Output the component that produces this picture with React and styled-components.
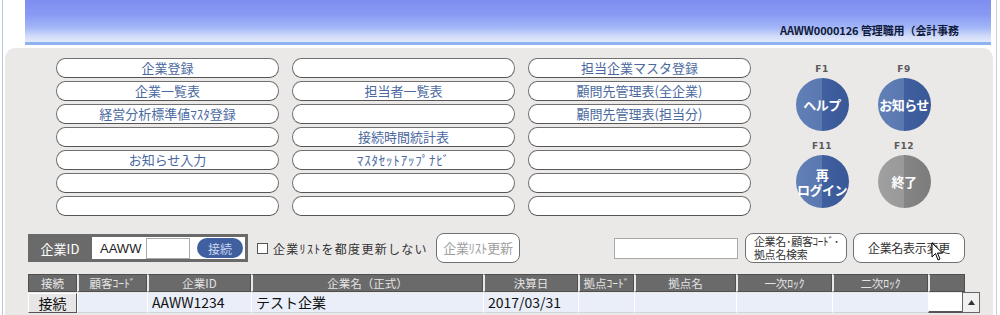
import React from 'react';
import styled, {createGlobalStyle} from 'styled-components';

const GlobalStyle = createGlobalStyle`
  body {
    margin: 0;
    background: #fff;
    font-family: "Noto Sans CJK JP", "Noto Sans", sans-serif;
  }
`;

const Page = styled.div`
  position: relative;
  width: 1000px;
  height: 315px;
  overflow: hidden;
  background: #fff;
  box-shadow: inset 2px 0 0 #fff, inset 3px 0 0 #b4c8e0, inset -3px 0 0 #fff, inset -4px 0 0 #d0d0d0;
`;

const Header = styled.div`
  margin-left: 25px;
  width: 966px;
  height: 45px;
  border-bottom: 3px solid #8eb4f0;
  background: linear-gradient(180deg, #7d8def 0%, #8a9af3 35%, #a2b6f8 65%, #d4def9 88%, #e2e9fb 100%);
  display: flex;
  align-items: flex-end;
  justify-content: flex-end;
  padding-right: 32px;
  box-sizing: border-box;
`;

const UserName = styled.div`
  font-size: 11px;
  font-weight: bold;
  color: #101a3a;
  line-height: 14px;
  margin-bottom: 5px;
  letter-spacing: -0.1px;
`;

const Panel = styled.div`
  margin: 3px 0 0 5px;
  width: 988px;
  height: 270px;
  background: #ebe8e8;
  border-radius: 10px 10px 0 0;
  padding: 10px 0 0 23px;
  box-sizing: border-box;
`;

const TopArea = styled.div`
  display: flex;
  align-items: flex-start;
`;

const MenuGrid = styled.div`
  margin-left: 28px;
  display: grid;
  grid-template-columns: repeat(3, 223px);
  grid-auto-flow: column;
  grid-template-rows: repeat(7, 20px);
  column-gap: 13px;
  row-gap: 3px;
`;

const MenuButton = styled.button`
  box-sizing: border-box;
  height: 20px;
  padding: 0;
  background: #fff;
  border: 1.5px solid #707070;
  border-bottom-color: #555;
  border-radius: 9px / 10px;
  font-family: "Noto Sans CJK JP", sans-serif;
  font-size: 13px;
  line-height: 16px;
  color: #4a69a0;
  text-align: center;
  letter-spacing: ${p => p.$ls || 0}px;
`;

const FKeys = styled.div`
  margin-left: 43px;
  padding-top: 6px;
  display: grid;
  grid-template-columns: repeat(2, 56px);
  column-gap: 26px;
  row-gap: 10px;
`;

const FKey = styled.div`
  display: flex;
  flex-direction: column;
  align-items: center;
`;

const FLabel = styled.div`
  font-family: "DejaVu Sans", sans-serif;
  font-size: 9px;
  font-weight: bold;
  color: #5a5a5a;
  line-height: 11px;
  height: 14px;
  letter-spacing: 0.5px;
`;

const Circle = styled.div`
  width: 53px;
  height: 53px;
  border-radius: 50%;
  background: ${p => p.$gray
    ? 'linear-gradient(90deg, #a0a0a0 0%, #999 50%, #858585 50%, #7c7c7c 100%)'
    : 'linear-gradient(90deg, #6180b6 0%, #5a78b0 50%, #3f5f9f 50%, #385898 100%)'};
  display: flex;
  align-items: center;
  justify-content: center;
  text-align: center;
  color: #fff;
  font-size: 13px;
  font-weight: bold;
  line-height: 15px;
  letter-spacing: -0.5px;
  white-space: pre-line;
`;

const Controls = styled.div`
  margin-top: 16px;
  height: 32px;
  display: flex;
  align-items: center;
`;

const IdBox = styled.div`
  width: 220px;
  height: 28px;
  background: #6a6a6a;
  display: flex;
  align-items: center;
  box-sizing: border-box;
  padding: 3px 3px 3px 0;
`;

const IdLabel = styled.div`
  width: 64px;
  text-align: center;
  color: #fff;
  font-size: 13px;
`;

const IdInner = styled.div`
  flex: 1;
  height: 100%;
  background: #fff;
  display: flex;
  align-items: center;
  padding-left: 8px;
`;

const Prefix = styled.span`
  font-family: "Liberation Sans", sans-serif;
  font-size: 13px;
  color: #222;
  width: 46px;
`;

const SmallInput = styled.div`
  box-sizing: border-box;
  width: ${p => p.$w}px;
  height: 21px;
  background: #fff;
  border: 1px solid #a8a8a8;
  margin-left: ${p => p.$ml || 0}px;
`;

const ConnectButton = styled.div`
  width: 46px;
  height: 20px;
  margin-left: 7px;
  border-radius: 10px;
  background: #3f5f9f;
  color: #c8d4ee;
  font-size: 12px;
  display: flex;
  align-items: center;
  justify-content: center;
`;

const Check = styled.label`
  display: flex;
  align-items: center;
  margin-left: 9px;
  font-size: 12px;
  color: #333;
  letter-spacing: 1.3px;
`;

const CheckBox = styled.span`
  width: 9px;
  height: 9px;
  border: 1px solid #555;
  background: #fff;
  margin-right: 5px;
`;

const PillButton = styled.div`
  box-sizing: border-box;
  width: ${p => p.$w}px;
  height: 30px;
  margin-left: ${p => p.$ml}px;
  border: 1.5px solid #707070;
  border-radius: 8px;
  background: #fff;
  color: ${p => (p.$disabled ? '#a0a0a0' : '#333')};
  font-size: ${p => p.$fs || 12}px;
  line-height: ${p => p.$lh || 14}px;
  display: flex;
  align-items: center;
  justify-content: ${p => (p.$left ? 'flex-start' : 'center')};
  padding-left: ${p => (p.$left ? 8 : 0)}px;
  white-space: pre-line;
  letter-spacing: -0.3px;
`;

const Table = styled.div`
  margin-top: 10px;
  display: grid;
  grid-template-columns: 49px 70px 104px 232px 95px 56px 102px 96px 96px 37px;
`;

const HeadCell = styled.div`
  box-sizing: border-box;
  height: 18px;
  background: #6a6a6a;
  border: 1px solid #4f4f4f;
  border-left: 2px solid #ebe8e8;
  color: #e4e4e4;
  font-size: 11.5px;
  line-height: 16px;
  text-align: center;
  &:first-child { border-left: 1px solid #4f4f4f; }
`;

const RowCell = styled.div`
  box-sizing: border-box;
  height: 20px;
  margin-top: 1px;
  background: ${p => (p.$white ? '#fff' : '#e9eef8')};
  border-left: 1px solid #fff;
  border-bottom: ${p => (p.$white ? '2px solid #555' : '1px solid #d0d4dc')};
  color: #111;
  font-size: 14px;
  line-height: 19px;
  padding-left: 4px;
  white-space: nowrap;
  overflow: hidden;
`;

const RowButton = styled.div`
  box-sizing: border-box;
  height: 20px;
  margin-top: 1px;
  background: #e6e6e6;
  border: 1px solid #fff;
  border-right-color: #555;
  border-bottom-color: #555;
  color: #111;
  font-size: 14px;
  line-height: 18px;
  text-align: center;
`;

const ScrollArrow = styled.div`
  position: absolute;
  left: 962px;
  top: 292px;
  width: 18px;
  height: 21px;
  box-sizing: border-box;
  border: 1px solid #666;
  background: #f0f0f0;
  display: flex;
  align-items: center;
  justify-content: center;
`;

const Cursor = styled.svg`
  position: absolute;
  left: 931px;
  top: 242px;
`;

const menu = [
  '企業登録', '企業一覧表', '経営分析標準値ﾏｽﾀ登録', '', 'お知らせ入力', '', '',
  '', '担当者一覧表', '', '接続時間統計表', 'ﾏｽﾀｾｯﾄｱｯﾌﾟﾅﾋﾞ', '', '',
  '担当企業マスタ登録', '顧問先管理表(全企業)', '顧問先管理表(担当分)', '', '', '', '',
];

const fkeys = [
  {key: 'F1', label: 'ヘルプ'},
  {key: 'F9', label: 'お知らせ'},
  {key: 'F11', label: '再\nログイン'},
  {key: 'F12', label: '終了', gray: true},
];

const heads = ['接続', '顧客ｺｰﾄﾞ', '企業ID', '企業名（正式）', '決算日', '拠点ｺｰﾄﾞ', '拠点名', '一次ﾛｯｸ', '二次ﾛｯｸ', ''];
const row = ['AAWW1234', 'テスト企業', '2017/03/31', '', '', '', ''];

export default function App() {
  return (
    <Page>
      <GlobalStyle />
      <Header>
        <UserName>AAWW0000126 管理職用（会計事務</UserName>
      </Header>
      <Panel>
        <TopArea>
          <MenuGrid>
            {menu.map((m, i) => (
              <MenuButton key={i} $ls={m === 'ﾏｽﾀｾｯﾄｱｯﾌﾟﾅﾋﾞ' ? 0.8 : 0}>{m}</MenuButton>
            ))}
          </MenuGrid>
          <FKeys>
            {fkeys.map(f => (
              <FKey key={f.key}>
                <FLabel>{f.key}</FLabel>
                <Circle $gray={f.gray}>{f.label}</Circle>
              </FKey>
            ))}
          </FKeys>
        </TopArea>

        <Controls>
          <IdBox>
            <IdLabel>企業ID</IdLabel>
            <IdInner>
              <Prefix>AAWW</Prefix>
              <SmallInput $w={44} />
              <ConnectButton>接続</ConnectButton>
            </IdInner>
          </IdBox>
          <Check><CheckBox />企業ﾘｽﾄを都度更新しない</Check>
          <PillButton $w={84} $ml={8} $disabled $fs={13}>企業ﾘｽﾄ更新</PillButton>
          <SmallInput $w={124} $ml={94} />
          <PillButton $w={102} $ml={7} $fs={11} $lh={13} $left>{'企業名･顧客ｺｰﾄﾞ･\n拠点名検索'}</PillButton>
          <PillButton $w={112} $ml={6} $fs={12}>企業名表示変更</PillButton>
        </Controls>

        <Table>
          {heads.map((h, i) => <HeadCell key={i}>{h}</HeadCell>)}
          <RowButton>接続</RowButton>
          <RowCell />
          {row.map((c, i) => <RowCell key={i}>{c}</RowCell>)}
          <RowCell $white />
        </Table>
      </Panel>

      <ScrollArrow>
        <svg width="7" height="5" viewBox="0 0 7 5"><path d="M3.5 0 L7 5 L0 5 Z" fill="#333" /></svg>
      </ScrollArrow>
      <Cursor width="13" height="20" viewBox="0 0 13 20">
        <path d="M1 1 L1 15 L4.5 11.5 L7 18 L9 17 L6.5 11 L11.5 11 Z" fill="#fff" stroke="#000" strokeWidth="1" />
      </Cursor>
    </Page>
  );
}
